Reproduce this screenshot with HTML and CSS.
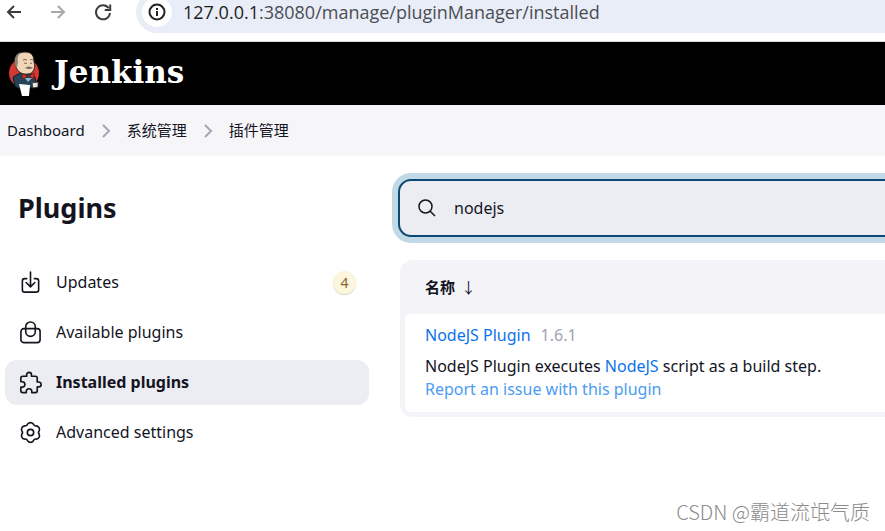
FILE: index.html
```
<!DOCTYPE html>
<html lang="zh-CN">
<head>
  <meta charset="UTF-8" />
  <meta name="viewport" content="width=device-width, initial-scale=1.0" />
  <title>Installed plugins - Plugins - Jenkins</title>
  <link rel="stylesheet" href="styles.css">
</head>
<body>
  <div class="browser-bar">
    <button class="nav-btn" type="button" aria-label="Back">
      <svg viewBox="0 0 20 20"><path d="M17 10H4M10 4l-6 6 6 6" /></svg>
    </button>
    <button class="nav-btn" type="button" aria-label="Forward" disabled>
      <svg viewBox="0 0 20 20"><path d="M3 10h13M10 4l6 6-6 6" /></svg>
    </button>
    <button class="nav-btn" type="button" aria-label="Reload">
      <svg viewBox="0 0 20 20"><path d="M16.700 6.200A7 7 0 1 0 18 11" /><path d="M18.200 2.500V8h-5.500" /></svg>
    </button>
    <div class="omnibox">
      <button class="site-info" type="button" aria-label="Site information">
        <svg viewBox="0 0 18 18"><circle cx="9" cy="9" r="7.500" /><path d="M9 8v5M9 5v2" /></svg>
      </button>
      <span class="url"><b>127.0.0.1</b>:38080/manage/pluginManager/installed</span>
    </div>
  </div>

  <header class="page-header">
    <a class="logo" href="#">
      <svg viewBox="0 0 32 46" aria-hidden="true">
        <ellipse cx="16" cy="22" rx="15" ry="15" fill="#d33833" />
        <path d="M5 26 L12 22 H22 L27 26 L28 34 L23 37 H10 L7 35 Z" fill="#234454" stroke="#10202a" />
        <path d="M7 12 C6 5 11 1 17 1 C24 1 26 5 26 11 C28 17 25 23 20 23 C13 24 8 20 7 12 Z" fill="#f0d6b7" stroke="#2b211c" />
        <path d="M8 17 C5 9 7 3 13 1 C10 4 9 7 10 11 L9 16 Z" fill="#8c8078" />
        <path d="M15 9 q2-1 4 0 M22 9 q1-1 3 0 M16 12 q2 1 3 0 M22 12 q1 1 2 0" fill="none" stroke="#7c6552" />
        <path d="M17 17 q4-3 8 0 q-4 2-8 0 Z" fill="#786a61" />
        <path d="M14 23 L20 25 L15 28 Z M26 22 L21 25 L26 28 Z" fill="#d33833" stroke="#731b19" />
        <path d="M17 27 L20 31 L24 27 Z" fill="#8fb5cb" />
        <path d="M11 33 L22 34 L21 45 H14 Z" fill="#fff" />
        <path d="M24 32 L30 31 L30 36 L25 37 Z" fill="#e9e7e5" stroke="#444" />
      </svg>
      <span>Jenkins</span>
    </a>
  </header>

  <nav class="breadcrumbs" aria-label="Breadcrumb">
    <a href="#">Dashboard</a>
    <svg viewBox="0 0 10 14"><path d="M2 1l6 6-6 6" /></svg>
    <a href="#">系统管理</a>
    <svg viewBox="0 0 10 14"><path d="M2 1l6 6-6 6" /></svg>
    <a href="#">插件管理</a>
  </nav>

  <div class="page-body">
    <aside class="side-panel">
      <h1>Plugins</h1>
      <nav class="tasks">
        <a class="task" href="#">
          <svg viewBox="0 0 24 24"><path d="M8 8H6a2.500 2.500 0 0 0-2.500 2.500v9A2.500 2.500 0 0 0 6 22h12a2.500 2.500 0 0 0 2.500-2.500v-9A2.500 2.500 0 0 0 18 8h-2M12 1v15M7.500 12l4.500 4.500 4.500-4.500" /></svg>
          <span>Updates</span>
          <span class="badge">4</span>
        </a>
        <a class="task" href="#">
          <svg viewBox="0 0 24 24"><rect x="2" y="8" width="20" height="14.500" rx="3" /><path d="M7 8V6a5 5 0 0 1 10 0v2M7 8v3a5 5 0 0 0 10 0V8" /></svg>
          <span>Available plugins</span>
        </a>
        <a class="task active" href="#">
          <svg viewBox="10 20 472 472"><path d="M413.660 246.100H386a2 2 0 0 1-2-2v-77.240A38.860 38.860 0 0 0 345.140 128H267.900a2 2 0 0 1-2-2V98.340c0-27.140-21.500-49.860-48.640-50.330a49.530 49.530 0 0 0-50.400 49.510V126a2 2 0 0 1-2 2H87.620A39.740 39.740 0 0 0 48 167.620V238a2 2 0 0 0 2 2h26.910c29.370 0 53.680 25.480 54.090 54.850.42 29.870-23.510 57.150-53.290 57.150H50a2 2 0 0 0-2 2v70.380A39.740 39.740 0 0 0 87.620 464H158a2 2 0 0 0 2-2v-20.930c0-30.280 24.750-56.350 55-57.060 30.100-.7 57 20.310 57 50.280V462a2 2 0 0 0 2 2h71.140A38.860 38.860 0 0 0 384 425.140v-78a2 2 0 0 1 2-2h28.480c27.630 0 49.520-22.670 49.520-50.400s-23.200-48.640-50.340-48.640z" /></svg>
          <span>Installed plugins</span>
        </a>
        <a class="task" href="#">
          <svg viewBox="0 0 24 24"><circle cx="12" cy="12" r="3.300" /><path d="M9.100 3.200A3.600 3.600 0 0 1 14.900 3.200A3 3 0 0 0 18.200 5.100A3.600 3.600 0 0 1 21.100 10.100A3 3 0 0 0 21.100 13.900A3.600 3.600 0 0 1 18.200 18.900A3 3 0 0 0 14.900 20.800A3.600 3.600 0 0 1 9.100 20.800A3 3 0 0 0 5.800 18.900A3.600 3.600 0 0 1 2.900 13.900A3 3 0 0 0 2.900 10.100A3.600 3.600 0 0 1 5.800 5.100A3 3 0 0 0 9.100 3.200Z" /></svg>
          <span>Advanced settings</span>
        </a>
      </nav>
    </aside>

    <main class="main-panel">
      <label class="search">
        <svg viewBox="0 0 18 18"><circle cx="7.500" cy="7.500" r="6.500" /><path d="M12 12L17 17" /></svg>
        <input type="text" value="nodejs" aria-label="Search installed plugins">
      </label>

      <table class="plugins">
        <thead>
          <tr><th>名称<span class="sort">↓</span></th></tr>
        </thead>
        <tbody>
          <tr>
            <td>
              <div class="plugin-name"><a href="#">NodeJS Plugin</a><span class="version">1.6.1</span></div>
              <div>NodeJS Plugin executes <a href="#">NodeJS</a> script as a build step.</div>
              <div><a class="report" href="#">Report an issue with this plugin</a></div>
            </td>
          </tr>
        </tbody>
      </table>
    </main>
  </div>

  <div class="watermark">CSDN @霸道流氓气质</div>
</body>
</html>
```
FILE: styles.css
```
:root {
  --text: #14141f;
  --link: #0b73ea;
  --panel: #f3f3f8;
  --active: #ececf3;
  --focus: #0b4a72;
}

* {
  box-sizing: border-box;
}

body {
  position: relative;
  margin: 0;
  min-height: 100vh;
  overflow: hidden;
  font-family: "Noto Sans", "Noto Sans CJK SC", sans-serif;
  font-size: 16px;
  line-height: 23px;
  color: var(--text);
  background: #fff;
}

a {
  color: var(--link);
  text-decoration: none;
}

svg {
  display: block;
  flex: none;
  fill: none;
  stroke: currentColor;
}

button {
  padding: 0;
  border: none;
  background: none;
  color: #3c3c3c;
}

/* browser toolbar */
.browser-bar {
  display: flex;
  align-items: center;
  gap: 24px;
  height: 42px;
  padding: 0 0 17px 4px;
  border-bottom: 1px solid #dcdcdc;
  overflow: hidden;
}

.nav-btn svg {
  width: 20px;
  height: 20px;
  stroke-width: 2;
}

.nav-btn:disabled {
  color: #a8a8a8;
}

.omnibox {
  display: flex;
  flex: 1;
  align-items: center;
  gap: 11px;
  height: 42px;
  margin-right: -24px;
  padding-left: 6px;
  border-radius: 21px;
  background: #e9edf7;
}

.site-info {
  display: flex;
  align-items: center;
  justify-content: center;
  width: 30px;
  height: 30px;
  border-radius: 50%;
  background: #fff;
  color: #222;
}

.site-info svg {
  width: 18px;
  height: 18px;
  stroke-width: 2;
}

.url {
  font-family: "Open Sans", sans-serif;
  font-size: 18px;
  color: #4a4d54;
}

.url b {
  font-weight: normal;
  color: #1c1d20;
}

/* header */
.page-header {
  display: flex;
  height: 63px;
  padding-left: 8px;
  background: #000;
}

.logo {
  display: flex;
  align-items: center;
  gap: 14px;
  color: #fff;
  font: bold 31px/60px "DejaVu Serif", serif;
}

.logo svg {
  width: 32px;
  height: 46px;
  stroke: none;
}

.logo span {
  padding-bottom: 3px;
}

.breadcrumbs {
  display: flex;
  align-items: center;
  gap: 16px;
  height: 51px;
  padding-left: 7px;
  font-size: 15px;
  background: #f6f6f9;
}

.breadcrumbs a {
  color: var(--text);
}

.breadcrumbs svg {
  width: 10px;
  height: 14px;
  color: #a5a5b8;
  stroke-width: 2;
}

/* page */
.page-body {
  display: flex;
  gap: 29px;
  padding: 23px 0 0 5px;
}

.side-panel {
  width: 364px;
  flex: none;
}

h1 {
  margin: 0 0 24px;
  padding-left: 13px;
  font-size: 27px;
  line-height: 57px;
}

.tasks {
  display: flex;
  flex-direction: column;
  gap: 5px;
}

.task {
  display: flex;
  align-items: center;
  gap: 14px;
  height: 45px;
  padding: 0 13px 0 14px;
  border-radius: 12px;
  color: var(--text);
}

.task svg {
  width: 23px;
  height: 23px;
  stroke-width: 1.7;
  stroke-linecap: round;
  stroke-linejoin: round;
}

.task.active svg {
  stroke-width: 34;
}

.task.active {
  background: var(--active);
  font-weight: bold;
}

.badge {
  width: 23px;
  height: 23px;
  margin-left: auto;
  border-radius: 50%;
  background: #fbf6dc;
  box-shadow: 0 1px 1px #d8d4c4;
  color: #886432;
  font-size: 14px;
  text-align: center;
}

.main-panel {
  flex: 1;
  margin-right: -24px;
}

.search {
  display: flex;
  align-items: center;
  gap: 18px;
  height: 58px;
  padding-left: 18px;
  border: 2px solid var(--focus);
  border-radius: 13px;
  background: var(--active);
  box-shadow: 0 0 0 6px #c1d8e6;
}

.search svg {
  width: 18px;
  height: 18px;
  stroke-width: 1.5;
}

.search input {
  flex: 1;
  padding: 0;
  border: none;
  outline: none;
  background: none;
  font: inherit;
  color: inherit;
}

.plugins {
  width: 100%;
  margin: 23px 0 0 2px;
  border: 5px solid var(--panel);
  border-top: none;
  border-radius: 13px;
  border-spacing: 0;
  background: var(--panel);
}

.plugins th {
  height: 54px;
  padding: 0 20px;
  font-size: 15px;
  text-align: left;
}

.sort {
  margin-left: 6px;
  font-weight: normal;
}

.plugins td {
  padding: 10px 20px 11px;
  border-radius: 5px;
  background: #fff;
}

.plugin-name {
  margin-bottom: 8px;
}

.version {
  margin-left: 10px;
  color: #a2a2b4;
}

.report {
  color: #4b9cf0;
}

.watermark {
  position: absolute;
  right: 15px;
  bottom: 8px;
  font-family: "Noto Sans CJK SC", sans-serif;
  font-size: 20px;
  font-weight: 300;
  color: #8c8c8c;
}
```
